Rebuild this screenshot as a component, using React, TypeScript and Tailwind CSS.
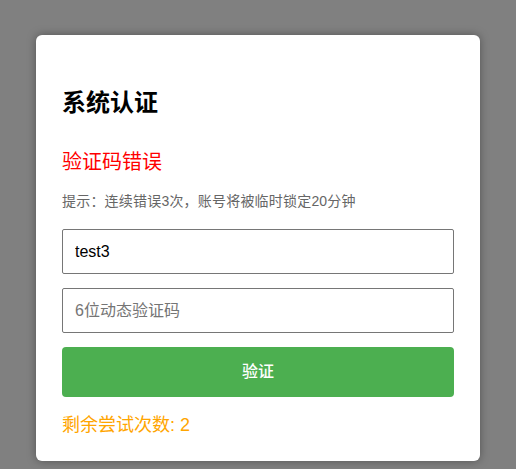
import React, { useState } from 'react';

const font = { fontFamily: '"Liberation Sans", "Noto Sans CJK SC", sans-serif' };

const App: React.FC = () => {
    const [user, setUser] = useState('test3');
    const [code, setCode] = useState('');

    return (
        <div className="min-h-screen w-full bg-[#808080] pt-[35px]" style={font}>
            <div className="mx-auto w-[444px] h-[426px] bg-white rounded-md shadow-[0_0_10px_rgba(0,0,0,0.35)] px-[26px] pt-[53px]">
                <h2 className="text-[24px] leading-[30px] font-bold text-black">系统认证</h2>
                <p className="mt-[30px] text-[20px] leading-[28px] text-[#ff0000]">验证码错误</p>
                <p className="mt-[15px] text-[14px] leading-[20px] text-[#666666] tracking-[0.2px]">
                    提示：连续错误3次，账号将被临时锁定20分钟
                </p>
                <input
                    value={user}
                    onChange={(e) => setUser(e.target.value)}
                    className="mt-[18px] block w-full h-[45px] px-3 text-[16px] text-black border border-[#767676] rounded-[2px] outline-none"
                />
                <input
                    value={code}
                    onChange={(e) => setCode(e.target.value)}
                    placeholder="6位动态验证码"
                    className="mt-[14px] block w-full h-[45px] px-3 text-[16px] text-black placeholder:text-[#757575] border border-[#767676] rounded-[2px] outline-none"
                />
                <button className="mt-[14px] block w-full h-[50px] bg-[#4caf50] text-white text-[16px] font-medium rounded-[4px]">
                    验证
                </button>
                <p className="mt-[15px] text-[18px] leading-[26px] text-[#ffa500]">剩余尝试次数: 2</p>
            </div>
        </div>
    );
};

export default App;
